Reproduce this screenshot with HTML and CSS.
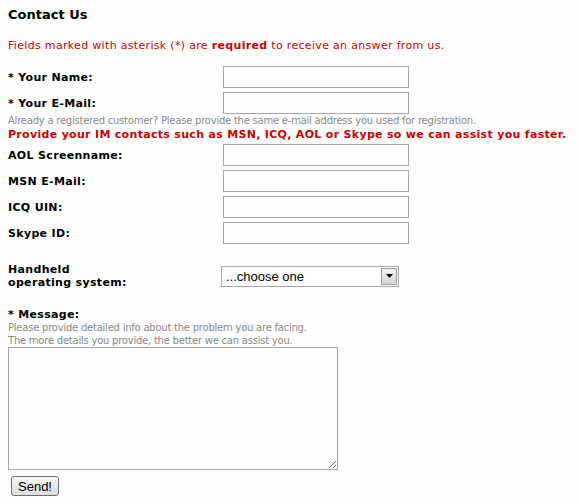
FILE: index.html
```html
<!DOCTYPE html>
<html>
<head>
<meta charset="utf-8">
<link rel="stylesheet" href="styles.css">
</head>
<body>
<div class="page">
  <h1 class="title">Contact Us</h1>
  <p class="notice">Fields marked with asterisk (*) are <b>required</b> to receive an answer from us.</p>
  <form class="form">
    <div class="row"><label class="label">* Your Name:</label><input class="field" type="text"></div>
    <div class="row"><label class="label">* Your E-Mail:</label><input class="field" type="text"></div>
    <p class="hint">Already a registered customer? Please provide the same e-mail address you used for registration.</p>
    <p class="im">Provide your IM contacts such as MSN, ICQ, AOL or Skype so we can assist you faster.</p>
    <div class="row"><label class="label">AOL Screenname:</label><input class="field" type="text"></div>
    <div class="row"><label class="label">MSN E-Mail:</label><input class="field" type="text"></div>
    <div class="row"><label class="label">ICQ UIN:</label><input class="field" type="text"></div>
    <div class="row"><label class="label">Skype ID:</label><input class="field" type="text"></div>
    <div class="row os-row">
      <label class="label">Handheld<br>operating system:</label>
      <div class="select">
        <span class="select-text">...choose one</span>
        <span class="select-btn"><svg width="7" height="4" viewBox="0 0 7 4"><path d="M0 0h7L3.5 4z" fill="#000"/></svg></span>
      </div>
    </div>
    <div class="msg-label">* Message:</div>
    <p class="hint2">Please provide detailed info about the problem you are facing.<br>The more details you provide, the better we can assist you.</p>
    <textarea class="message"></textarea>
    <div class="actions"><button class="send" type="button">Send!</button></div>
  </form>
</div>
</body>
</html>
```
FILE: styles.css
```css
html, body {
  margin: 0;
  padding: 0;
  background: #fdfefd;
}
.page {
  padding: 7px 8px 0 8px;
  font-family: "DejaVu Sans", Verdana, sans-serif;
  font-size: 11px;
  color: #000;
}
.title {
  margin: 0;
  font-size: 13px;
  line-height: 16px;
  font-weight: bold;
}
.notice {
  margin: 16px 0 0 0;
  line-height: 14px;
  color: #cc0000;
  letter-spacing: 0.32px;
}
.notice b {
  font-weight: bold;
}
.form {
  margin: 13px 0 0 0;
}
.row {
  display: flex;
  align-items: center;
  height: 22px;
  margin-bottom: 4px;
}
.label {
  width: 215px;
  flex: none;
  font-weight: bold;
  line-height: 13px;
  letter-spacing: 0.33px;
}
.field {
  box-sizing: border-box;
  width: 186px;
  height: 22px;
  margin: 0;
  border: 1px solid #a5a5a5;
  background: #fdfefd;
  padding: 0 2px;
}
.hint {
  margin: -4px 0 0 0;
  line-height: 13px;
  color: #888;
  font-size: 10px;
  letter-spacing: -0.23px;
}
.im {
  margin: 1px 0 2px 0;
  line-height: 14px;
  color: #cc0000;
  font-weight: bold;
  letter-spacing: 0.31px;
}
.os-row {
  height: 26px;
  margin-top: 19px;
  margin-bottom: 0;
}
.select {
  box-sizing: border-box;
  margin-left: -2px;
  width: 178px;
  height: 21px;
  border: 1px solid #a5a5a5;
  background: #fff;
  display: flex;
  align-items: center;
  justify-content: space-between;
  padding: 0 1px 0 4px;
}
.select-text {
  font-family: "Liberation Sans", Arial, sans-serif;
  font-size: 13px;
  color: #000;
}
.select-btn {
  box-sizing: border-box;
  width: 16px;
  height: 17px;
  border: 1px solid #9c9c9c;
  background: linear-gradient(#f4f4f4, #d6d6d6);
  display: flex;
  align-items: center;
  justify-content: center;
}
.msg-label {
  margin-top: 19px;
  font-weight: bold;
  line-height: 13px;
  letter-spacing: 0.33px;
}
.hint2 {
  margin: 0;
  line-height: 13px;
  color: #888;
  font-size: 10px;
  letter-spacing: -0.23px;
}
.message {
  display: block;
  box-sizing: border-box;
  margin: 0;
  width: 330px;
  height: 123px;
  border: 1px solid #a5a5a5;
  background: #fdfefd;
  padding: 2px;
}
.actions {
  margin-top: 6px;
  padding-left: 3px;
}
.send {
  box-sizing: border-box;
  width: 48px;
  height: 20px;
  margin: 0;
  padding: 0;
  font-family: "Liberation Sans", Arial, sans-serif;
  font-size: 13px;
  color: #000;
  border: 1px solid #707070;
  border-radius: 3px;
  background: linear-gradient(#f6f6f6, #dedede);
}
```
